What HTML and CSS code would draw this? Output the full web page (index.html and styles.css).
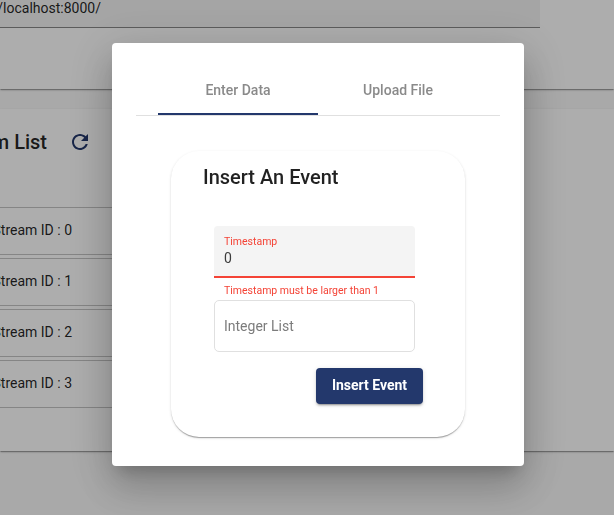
FILE: index.html
```html
<!DOCTYPE html>
<html lang="en">
<head>
<meta charset="utf-8">
<title>Streams</title>
<link rel="stylesheet" href="styles.css">
</head>
<body>
<main class="page">
  <section class="card connection">
    <div class="url-field"><span class="url">/localhost:8000/</span></div>
  </section>
  <section class="card streams">
    <header class="streams-head">
      <h2 class="streams-title">m List</h2>
      <svg class="refresh" viewBox="0 0 24 24"><path d="M17.65 6.35C16.2 4.9 14.21 4 12 4c-4.42 0-7.99 3.58-7.99 8s3.57 8 7.99 8c3.73 0 6.84-2.55 7.73-6h-2.08c-.82 2.33-3.04 4-5.65 4-3.31 0-6-2.69-6-6s2.69-6 6-6c1.66 0 3.14.69 4.22 1.78L13 11h7V4l-2.35 2.35z"/></svg>
    </header>
    <ul class="rows">
      <li class="row"><span class="row-label">Stream ID : 0</span></li>
      <li class="row"><span class="row-label">Stream ID : 1</span></li>
      <li class="row"><span class="row-label">Stream ID : 2</span></li>
      <li class="row"><span class="row-label">Stream ID : 3</span></li>
    </ul>
  </section>
</main>
<div class="backdrop">
  <div class="dialog" role="dialog">
    <nav class="tabs">
      <a class="tab active">Enter Data</a>
      <a class="tab">Upload File</a>
    </nav>
    <form class="event-card">
      <h1 class="event-title">Insert An Event</h1>
      <div class="fields">
        <label class="filled">
          <span class="filled-label">Timestamp</span>
          <span class="filled-value">0</span>
        </label>
        <div class="error">Timestamp must be larger than 1</div>
        <label class="outlined">Integer List</label>
      </div>
      <button class="submit" type="button">Insert Event</button>
    </form>
  </div>
</div>
</body>
</html>
```
FILE: styles.css
```css
* { box-sizing: border-box; }
body {
  margin: 0;
  height: 515px;
  overflow: hidden;
  background: #fafafa;
  font: 400 14px/20px Roboto, sans-serif;
  color: rgba(0, 0, 0, .87);
}
h1, h2, ul { margin: 0; padding: 0; font-weight: 500; }
.card {
  background: #fff;
  box-shadow: 0 2px 1px -1px rgba(0, 0, 0, .2), 0 1px 1px rgba(0, 0, 0, .14), 0 1px 3px rgba(0, 0, 0, .12);
}
.connection { height: 89px; margin-bottom: 20px; }
.url-field {
  width: 540px;
  height: 28px;
  border-bottom: 1px solid #888;
  background: #f4f4f4;
}
.url {
  display: flex;
  justify-content: flex-end;
  width: 101px;
  line-height: 16px;
}
.streams { height: 342px; }
.streams-head {
  display: flex;
  align-items: center;
  height: 66px;
}
.streams-title {
  display: flex;
  justify-content: flex-end;
  width: 47px;
  margin-right: 21px;
  font-size: 20px;
  white-space: nowrap;
}
.refresh { width: 24px; height: 24px; fill: #23386c; }
.rows {
  display: grid;
  gap: 3px;
  width: 500px;
  margin-top: 32px;
  list-style: none;
  font-weight: 400;
}
.row {
  display: flex;
  align-items: center;
  height: 48px;
  padding-bottom: 2px;
  border: solid #c4c4c4;
  border-width: 1px 0;
}
.row-label {
  display: flex;
  justify-content: flex-end;
  width: 72px;
  white-space: nowrap;
}
.backdrop {
  position: fixed;
  inset: 0;
  display: flex;
  align-items: flex-start;
  padding: 43px 90px 0 112px;
  background: rgba(0, 0, 0, .32);
}
.dialog {
  width: 412px;
  height: 423px;
  padding: 24px;
  border-radius: 4px;
  background: #fff;
  box-shadow: 0 11px 15px -7px rgba(0, 0, 0, .2), 0 24px 38px 3px rgba(0, 0, 0, .14), 0 9px 46px 8px rgba(0, 0, 0, .12);
}
.tabs {
  display: flex;
  justify-content: center;
  height: 49px;
  border-bottom: 1px solid #e0e0e0;
}
.tab {
  width: 160px;
  line-height: 46px;
  border-bottom: 2px solid transparent;
  text-align: center;
  font-weight: 500;
  color: #8a8a8a;
}
.tab.active { border-color: #23386c; }
.event-card {
  display: flex;
  flex-direction: column;
  width: 294px;
  height: 286px;
  margin: 35px 0 0 35px;
  padding: 10px 42px 0 43px;
  border-radius: 28px;
  box-shadow: 0 2px 1px -1px rgba(0, 0, 0, .2), 0 1px 1px rgba(0, 0, 0, .14), 0 1px 3px rgba(0, 0, 0, .12);
}
.event-title {
  margin-left: -11px;
  font-size: 20px;
  line-height: 32px;
}
.fields { width: 201px; margin-top: 33px; }
.filled {
  display: flex;
  flex-direction: column;
  height: 52px;
  padding: 8px 10px 0;
  border-bottom: 2px solid #f44336;
  background: linear-gradient(#f4f4f4, #f4f4f4);
  border-radius: 4px 4px 0 0;
}
.filled-label { font-size: 10.5px; line-height: 16px; color: #f44336; }
.filled-value { line-height: 16px; color: #3c3c3c; }
.error {
  height: 22px;
  padding: 5px 10px 0;
  font-size: 10.5px;
  line-height: 16px;
  white-space: nowrap;
  color: #f44336;
}
.outlined {
  display: flex;
  align-items: center;
  height: 52px;
  padding: 0 9px;
  border: 1px solid #e0e0e0;
  border-radius: 5px;
  color: #7c7c7c;
}
.submit {
  width: 107px;
  height: 36px;
  margin: 16px 0 0 102px;
  padding: 0 0 2px;
  border: 0;
  border-radius: 4px;
  background: #23386c;
  color: #fff;
  font: 700 14px Roboto, sans-serif;
  box-shadow: 0 3px 1px -2px rgba(0, 0, 0, .2), 0 2px 2px rgba(0, 0, 0, .14), 0 1px 5px rgba(0, 0, 0, .12);
}
```
